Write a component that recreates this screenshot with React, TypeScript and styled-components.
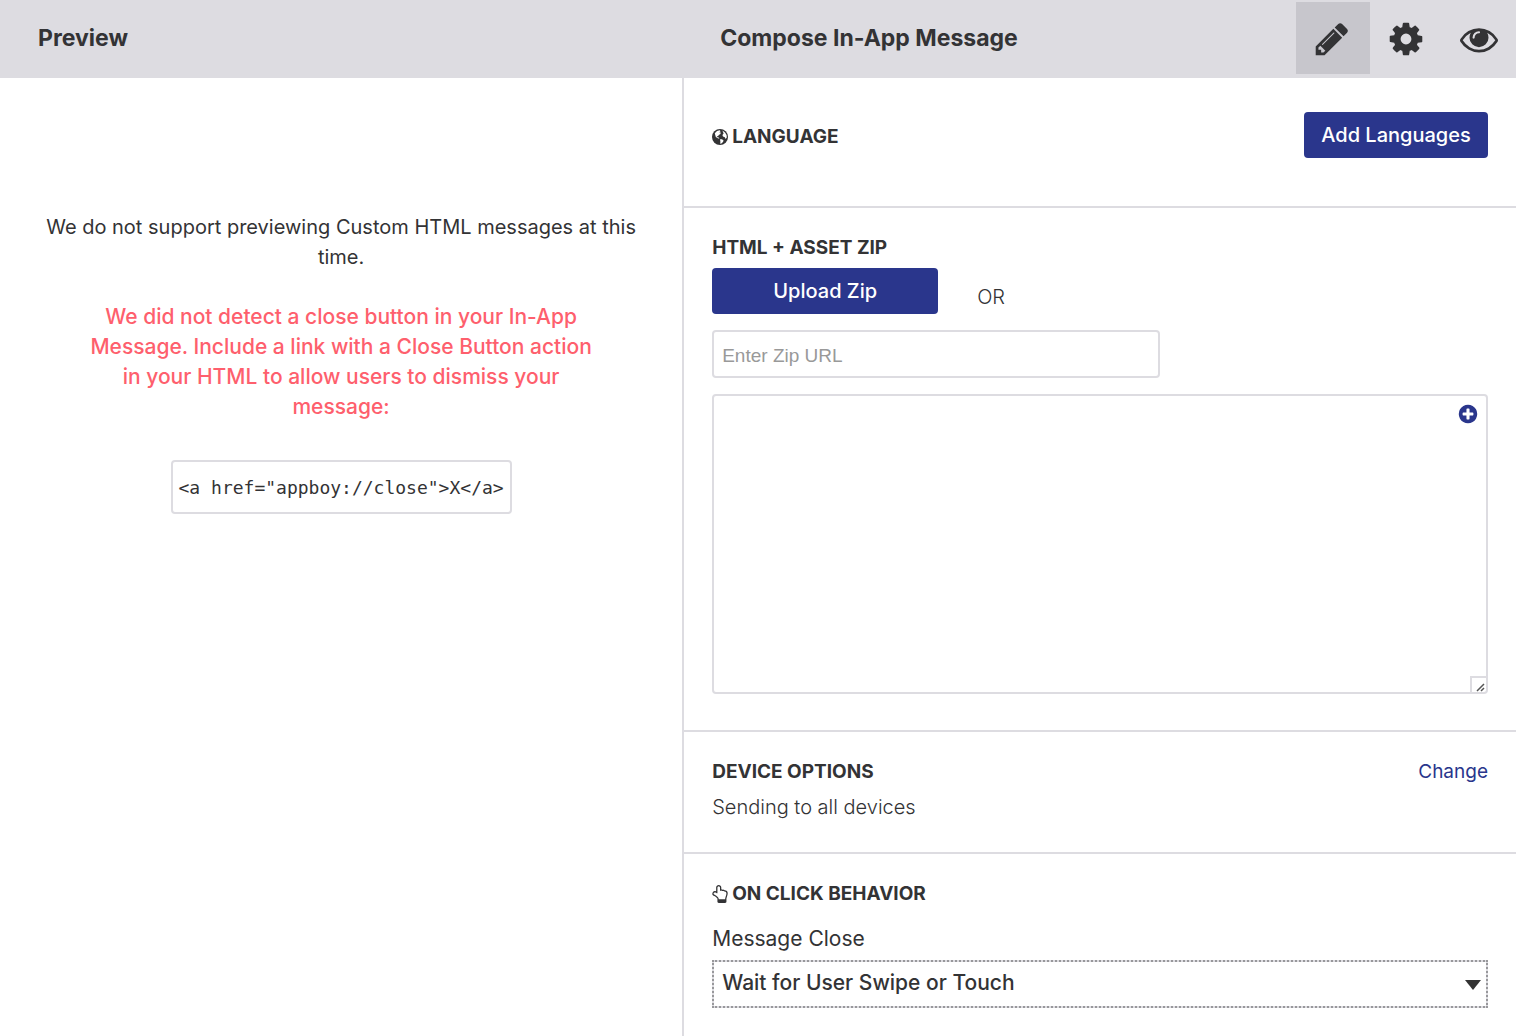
import React from "react";
import styled, { createGlobalStyle } from "styled-components";

const ink = "#333335";
const line = "#dddce1";
const navy = "#2a368c";

const GlobalStyle = createGlobalStyle`
  *, *::before, *::after { box-sizing: border-box; }
  body {
    margin: 0;
    background: #fff;
    color: ${ink};
    font-family: Inter, "Liberation Sans", sans-serif;
    font-size: 20px;
    line-height: 30px;
  }
  h1, h2, p { margin: 0; }
  button, input, select, textarea { font: inherit; color: inherit; }
`;

const Page = styled.div`
  display: flex;
  flex-direction: column;
  min-height: 100vh;
`;

const TopBar = styled.header`
  display: grid;
  grid-template-columns: 45fr 55fr;
  height: 78px;
  background: ${line};
`;

const BarCell = styled.div`
  display: flex;
  justify-content: space-between;
  padding-left: 38px;
`;

const Title = styled.h1`
  padding-top: 23px;
  font-size: 23px;
  line-height: 30px;
  font-weight: 700;
`;

const Tools = styled.nav`
  display: flex;
  align-items: flex-start;
  padding-top: 2px;
`;

const Tool = styled.button<{ $active?: boolean }>`
  display: flex;
  align-items: center;
  justify-content: center;
  width: ${(p) => (p.$active ? 74 : 73)}px;
  height: 72px;
  padding: 2px 2px 0 0;
  border: 0;
  background: ${(p) => (p.$active ? "#c7c6cc" : "transparent")};
  cursor: pointer;
`;

const Columns = styled.main`
  display: grid;
  grid-template-columns: 45fr 55fr;
  flex: 1;
`;

const PreviewPane = styled.section`
  display: flex;
  flex-direction: column;
  align-items: center;
  padding: 134px 40px 0;
  text-align: center;
`;

const Warning = styled.p`
  max-width: 520px;
  margin-top: 30px;
  color: #fe5f6d;
  font-size: 21px;
  font-weight: 500;
`;

const Snippet = styled.code`
  margin-top: 38px;
  padding: 11px 6px 9px;
  border: 2px solid ${line};
  border-radius: 4px;
  font-family: "DejaVu Sans Mono", monospace;
  font-size: 18px;
  line-height: 30px;
`;

const Editor = styled.div`
  border-left: 2px solid ${line};
`;

const Block = styled.section<{ $top: number; $bottom: number }>`
  padding: ${(p) => p.$top}px 28px ${(p) => p.$bottom}px;
  & + & { border-top: 2px solid ${line}; }
`;

const Split = styled.div`
  display: flex;
  justify-content: space-between;
  align-items: flex-start;
`;

const Heading = styled.h2<{ $drop?: boolean }>`
  display: flex;
  align-items: center;
  gap: 4px;
  padding-top: ${(p) => (p.$drop ? 10 : 0)}px;
  font-size: 19px;
  line-height: 30px;
  font-weight: 700;
`;

const Button = styled.button<{ $width: number }>`
  width: ${(p) => p.$width}px;
  height: 46px;
  padding: 0;
  border: 0;
  border-radius: 4px;
  background: ${navy};
  color: #fff;
  font-size: 20px;
  font-weight: 500;
  cursor: pointer;
`;

const UploadRow = styled.div`
  display: flex;
  gap: 39px;
  margin-top: 5px;
`;

const Or = styled.span`
  padding-top: 14px;
  font-weight: 300;
`;

const UrlInput = styled.input`
  display: block;
  width: 448px;
  max-width: 100%;
  height: 48px;
  margin-top: 16px;
  padding: 3px 8px 0;
  border: 2px solid ${line};
  border-radius: 4px;
  font-family: "Liberation Sans", Arial, sans-serif;
  font-size: 19px;
  &::placeholder { color: #999; opacity: 1; }
`;

const CodeArea = styled.div`
  position: relative;
  margin-top: 16px;
`;

const CodeInput = styled.textarea`
  display: block;
  width: 100%;
  height: 300px;
  padding: 8px;
  border: 2px solid ${line};
  border-radius: 4px;
  resize: none;
`;

const InsertButton = styled.button`
  position: absolute;
  top: 10px;
  right: 10px;
  display: flex;
  padding: 0;
  border: 0;
  background: none;
  color: ${navy};
  cursor: pointer;
`;

const Grip = styled.span`
  position: absolute;
  right: 2px;
  bottom: 2px;
  display: flex;
  align-items: flex-end;
  justify-content: flex-end;
  width: 16px;
  height: 16px;
  border: solid ${line};
  border-width: 2px 0 0 2px;
  pointer-events: none;
`;

const ChangeLink = styled.a`
  color: ${navy};
  font-size: 19px;
  text-decoration: none;
`;

const Note = styled.p`
  margin-top: 5px;
  font-weight: 300;
`;

const FieldLabel = styled.label`
  display: block;
  margin-top: 15px;
  font-size: 21px;
  line-height: 30px;
`;

const SelectBox = styled.div`
  position: relative;
  margin-top: 6px;
`;

const Select = styled.select`
  display: block;
  width: 100%;
  height: 48px;
  padding: 0 40px 2px 8px;
  border: 2px solid ${line};
  outline: 2px dotted #98989b;
  outline-offset: -2px;
  background: #fff;
  font-size: 21px;
  font-weight: 500;
  appearance: none;
`;

const Caret = styled.span`
  position: absolute;
  top: 20px;
  right: 7px;
  border: solid transparent;
  border-width: 10px 8px 0;
  border-top-color: #333;
  pointer-events: none;
`;

const paths = {
  pencil:
    "M491 1536l91-91-235-235-91 91v107h128v128h107zm523-928q0-22-22-22-10 0-17 7l-542 542q-7 7-7 17 0 22 22 22 10 0 17-7l542-542q7-7 7-17zm-54-192l416 416-832 832h-416v-416zm683 96q0 53-37 90l-166 166-416-416 166-165q36-38 90-38 53 0 91 38l235 234q37 39 37 91z",
  cog: "M1152 896q0-106-75-181t-181-75-181 75-75 181 75 181 181 75 181-75 75-181zm512-109v222q0 12-8 23t-20 13l-185 28q-19 54-39 91 35 50 107 138 10 12 10 25t-9 23q-27 37-99 108t-94 71q-12 0-26-9l-138-108q-44 23-91 38-16 136-29 186-7 28-36 28h-222q-14 0-24.500-8.500t-11.500-21.500l-28-184q-49-16-90-37l-141 107q-10 9-25 9-14 0-25-11-126-114-165-168-7-10-7-23 0-12 8-23 15-21 51-66.500t54-70.500q-27-50-41-99l-183-27q-13-2-21-12.500t-8-23.500v-222q0-12 8-23t19-13l186-28q14-46 39-92-40-57-107-138-10-12-10-24 0-10 9-23 26-36 98.500-107.500t94.500-71.500q13 0 26 10l138 107q44-23 91-38 16-136 29-186 7-28 36-28h222q14 0 24.500 8.500t11.500 21.500l28 184q49 16 90 37l142-107q9-9 24-9 13 0 25 10 129 119 165 170 7 8 7 22 0 12-8 23-15 21-51 66.500t-54 70.500q26 50 41 98l183 28q13 2 21 12.500t8 23.500z",
  eye: "M1664 960q-152-236-381-353 61 104 61 225 0 185-131.500 316.500t-316.500 131.500-316.500-131.500-131.500-316.500q0-121 61-225-229 117-381 353 133 205 333.500 326.500t434.500 121.500 434.500-121.500 333.500-326.500zm-720-384q0-20-14-34t-34-14q-125 0-214.500 89.500t-89.500 214.500q0 20 14 34t34 14 34-14 14-34q0-86 61-147t147-61q20 0 34-14t14-34zm848 384q0 34-20 69-140 230-376.500 368.500t-499.500 138.500-499.500-139-376.500-368q-20-35-20-69t20-69q140-229 376.500-368t499.500-139 499.500 139 376.500 368q20 35 20 69z",
  plus: "M1344 960v-128q0-26-19-45t-45-19h-256v-256q0-26-19-45t-45-19h-128q-26 0-45 19t-19 45v256h-256q-26 0-45 19t-19 45v128q0 26 19 45t45 19h256v256q0 26 19 45t45 19h128q26 0 45-19t19-45v-256h256q26 0 45-19t19-45zm320-64q0 209-103 385.500t-279.500 279.500-385.500 103-385.500-103-279.500-279.500-103-385.500 103-385.500 279.500-279.500 385.500-103 385.500 103 279.500 279.500 103 385.500z",
  hand: "M1536 836q0-189-167-189-26 0-56 5-16-30-52.500-47.500t-73.500-17.500-69 18q-50-53-119-53-25 0-55.500 10t-47.500 25v-331q0-52-38-90t-90-38q-51 0-89.500 39t-38.500 89v576q-20 0-48.500-15t-55-33-68-33-84.500-15q-67 0-97.500 44.500t-30.500 115.500q0 24 139 90 44 24 65 37 64 40 145 112 81 71 106 101 57 69 57 140v32h640v-32q0-72 32-167t64-193.500 32-179.500zm128-5q0 133-69 322-59 164-59 223v288q0 53-37.500 90.500t-90.500 37.500h-640q-53 0-90.500-37.500t-37.500-90.500v-288q0-10-4.500-21.500t-14-23.500-18-22.500-22.500-24-21.500-20.500-21.500-19-17-14q-74-65-129-100-21-13-62-33t-72-37-63-40.500-49.500-55-17.500-69.500q0-125 67-206.500t189-81.500q68 0 128 22v-374q0-104 77-180t179-76q105 0 181 75.500t76 180.500v169q62 4 119 37 21-3 43-3 101 0 178 60 139-1 219.500 85t80.500 227z",
};

type IconProps = { d: string; width: number; height?: number; box?: string };

const Icon = ({ d, width, height = width, box = "0 0 1792 1792" }: IconProps) => (
  <svg width={width} height={height} viewBox={box} fill="currentColor" aria-hidden="true">
    <path d={d} />
  </svg>
);

const Globe = () => (
  <svg width="16" height="16" viewBox="0 0 16 16" aria-hidden="true">
    <circle cx="8" cy="8" r="8" fill={ink} />
    <path
      d="M2.800 4.200L5 2 7.800 1.200 8.600 2.200 7.200 3.200 8.800 3.600 8.400 5 6.800 6 6 7.200 4.800 7 5.400 8.200 6.800 8.600 7.400 9.800 5.800 9.200 3.800 8z"
      fill="#fff"
    />
    <path d="M10.400 1.600L13 3.400 14.600 6 14.800 8.600 13.600 10 12.800 8.200 11 7.600 10.400 6 11.600 4.400z" fill="#fff" />
    <path d="M8 10.200L10 10.200 11.600 11.400 11 13 9.400 14.600 8.200 14.800 8.400 12.800z" fill="#fff" />
  </svg>
);

export default function App() {
  return (
    <Page>
      <GlobalStyle />
      <TopBar>
        <BarCell>
          <Title>Preview</Title>
        </BarCell>
        <BarCell>
          <Title>Compose In-App Message</Title>
          <Tools>
            <Tool $active aria-label="Compose"><Icon d={paths.pencil} width={38} /></Tool>
            <Tool aria-label="Settings"><Icon d={paths.cog} width={38} /></Tool>
            <Tool aria-label="Preview"><Icon d={paths.eye} width={38} /></Tool>
          </Tools>
        </BarCell>
      </TopBar>
      <Columns>
        <PreviewPane>
          <p>We do not support previewing Custom HTML messages at this time.</p>
          <Warning>
            We did not detect a close button in your In-App Message. Include a link with a Close
            Button action in your HTML to allow users to dismiss your message:
          </Warning>
          <Snippet>{'<a href="appboy://close">X</a>'}</Snippet>
        </PreviewPane>
        <Editor>
          <Block $top={34} $bottom={48}>
            <Split>
              <Heading $drop><Globe />LANGUAGE</Heading>
              <Button $width={184}>Add Languages</Button>
            </Split>
          </Block>
          <Block $top={25} $bottom={36}>
            <Heading>HTML + ASSET ZIP</Heading>
            <UploadRow>
              <Button $width={226}>Upload Zip</Button>
              <Or>OR</Or>
            </UploadRow>
            <UrlInput type="url" placeholder="Enter Zip URL" aria-label="Zip URL" />
            <CodeArea>
              <CodeInput aria-label="HTML" />
              <InsertButton aria-label="Insert">
                <Icon d={paths.plus} width={20} box="64 64 1664 1664" />
              </InsertButton>
              <Grip>
                <svg width="10" height="10" viewBox="0 0 10 10" stroke="#555" strokeWidth="1.500" fill="none" aria-hidden="true">
                  <path d="M1 9L8 2M5 9L8 6" />
                </svg>
              </Grip>
            </CodeArea>
          </Block>
          <Block $top={25} $bottom={30}>
            <Split>
              <Heading>DEVICE OPTIONS</Heading>
              <ChangeLink href="#device-options">Change</ChangeLink>
            </Split>
            <Note>Sending to all devices</Note>
          </Block>
          <Block $top={25} $bottom={28}>
            <Heading>
              <Icon d={`${paths.hand}M640 1440h768v240h-768z`} width={16} height={18} box="128 0 1536 1792" />
              ON CLICK BEHAVIOR
            </Heading>
            <FieldLabel htmlFor="message-close">Message Close</FieldLabel>
            <SelectBox>
              <Select id="message-close" defaultValue="wait">
                <option value="wait">Wait for User Swipe or Touch</option>
              </Select>
              <Caret />
            </SelectBox>
          </Block>
        </Editor>
      </Columns>
    </Page>
  );
}
